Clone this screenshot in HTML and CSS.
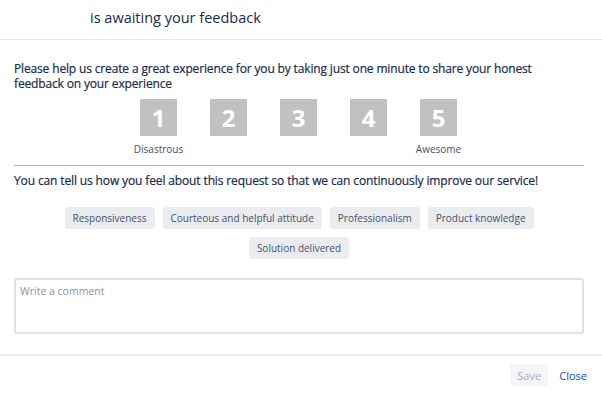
FILE: index.html
```html
<!DOCTYPE html>
<html lang="en">
<head>
  <meta charset="UTF-8">
  <title>Feedback</title>
  <link rel="stylesheet" href="styles.css">
</head>
<body>
  <div class="header">
    <h1>is awaiting your feedback</h1>
  </div>

  <div class="content">
    <p class="intro">Please help us create a great experience for you by taking just one minute to share your honest feedback on your experience</p>

    <div class="ratings">
      <div class="rating">
        <span class="rating-box">1</span>
        <span class="rating-label">Disastrous</span>
      </div>
      <div class="rating">
        <span class="rating-box">2</span>
      </div>
      <div class="rating">
        <span class="rating-box">3</span>
      </div>
      <div class="rating">
        <span class="rating-box">4</span>
      </div>
      <div class="rating">
        <span class="rating-box">5</span>
        <span class="rating-label">Awesome</span>
      </div>
    </div>

    <div class="divider"></div>

    <p class="ask">You can tell us how you feel about this request so that we can continuously improve our service!</p>

    <div class="tags">
      <span class="tag">Responsiveness</span>
      <span class="tag">Courteous and helpful attitude</span>
      <span class="tag">Professionalism</span>
      <span class="tag">Product knowledge</span>
      <span class="tag">Solution delivered</span>
    </div>

    <textarea class="comment" placeholder="Write a comment"></textarea>
  </div>

  <div class="footer">
    <button class="save" disabled>Save</button>
    <a class="close" href="#">Close</a>
  </div>
</body>
</html>
```

FILE: styles.css
```css
body {
  font-family: 'Open Sans', sans-serif;
  background: #fff;
  color: #172b4d;
  margin: 0;
}

.header {
  height: 39px;
  border-bottom: 1px solid #e6e8eb;
  padding-left: 90px;
  display: flex;
  align-items: center;
}

.header h1 {
  margin: 0 0 5px;
  font-size: 14.5px;
  font-weight: 400;
  color: #172b4d;
}

.content {
  padding: 0 18px 0 14px;
}

.intro {
  margin: 21px 0 0;
  font-size: 12px;
  line-height: 15px;
  letter-spacing: -0.15px;
  font-weight: 400;
  color: #172b4d;
  -webkit-text-stroke: 0.2px #172b4d;
}

.ratings {
  display: flex;
  justify-content: center;
  gap: 33px;
  margin-top: 8px;
  margin-left: -1px;
}

.rating {
  width: 37px;
  display: flex;
  flex-direction: column;
  align-items: center;
}

.rating-box {
  width: 37px;
  height: 37px;
  background: #c1c1c1;
  color: #fff;
  font-size: 24px;
  font-weight: 700;
  display: flex;
  align-items: center;
  justify-content: center;
}

.rating-label {
  margin-top: 6px;
  font-size: 10px;
  color: #42526e;
  white-space: nowrap;
}

.divider {
  height: 1px;
  background: #b3b6bb;
  margin-top: 9px;
}

.ask {
  margin: 7px 0 0;
  font-size: 12px;
  line-height: 16px;
  letter-spacing: -0.13px;
  font-weight: 400;
  color: #172b4d;
  -webkit-text-stroke: 0.2px #172b4d;
}

.tags {
  display: flex;
  flex-wrap: wrap;
  justify-content: center;
  gap: 8px;
  margin-top: 18px;
}

.tag {
  background: #ebecf0;
  color: #42526e;
  font-size: 10px;
  height: 22px;
  line-height: 22px;
  padding: 0 8px;
  border-radius: 3px;
}

.comment {
  display: block;
  box-sizing: border-box;
  width: 100%;
  height: 56px;
  margin-top: 19px;
  border: 2px solid #dfe1e6;
  border-radius: 3px;
  padding: 4px 4px;
  font-family: 'Open Sans', sans-serif;
  font-size: 10.5px;
  resize: none;
}

.comment::placeholder {
  color: #8993a4;
}

.footer {
  margin-top: 20px;
  border-top: 2px solid #ebecf0;
  display: flex;
  justify-content: flex-end;
  align-items: center;
  gap: 11px;
  padding: 8px 15px 0 0;
}

.save {
  width: 38px;
  height: 22px;
  padding: 0;
  border: none;
  border-radius: 3px;
  background: #f4f5f7;
  color: #a5adba;
  font-family: 'Open Sans', sans-serif;
  font-size: 11px;
}

.close {
  color: #0052cc;
  font-size: 11px;
  text-decoration: none;
}
```
